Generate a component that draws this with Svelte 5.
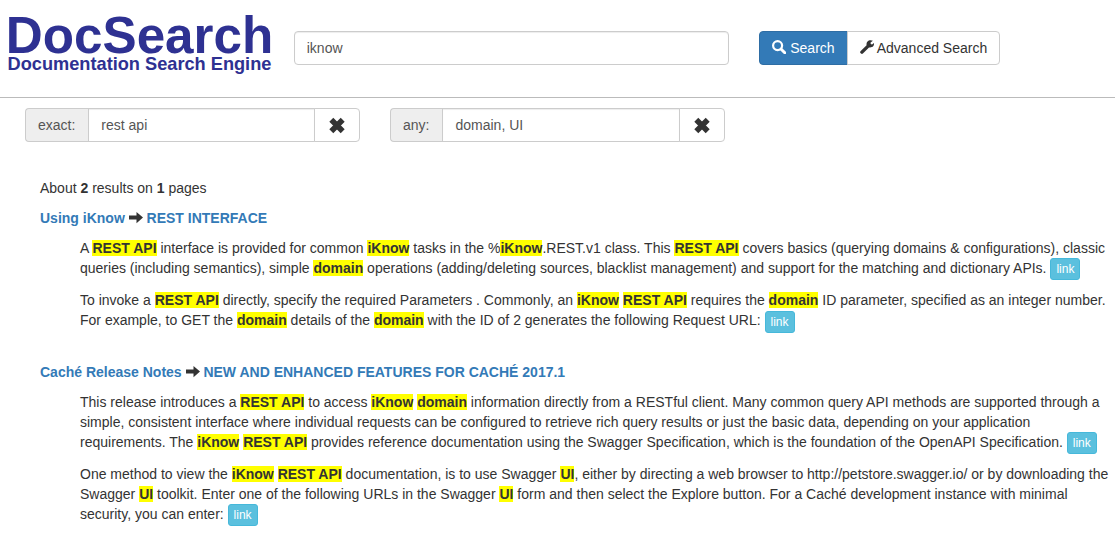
<script lang="ts">
	type Filter = { id: string; label: string; value: string };
	type Result = { book: string; topic: string; snippets: string[] };

	let query = $state('iknow');

	let filters: Filter[] = $state([
		{ id: 'exact', label: 'exact:', value: 'rest api' },
		{ id: 'any', label: 'any:', value: 'domain, UI' }
	]);

	// matched terms are wrapped in asterisks
	const results: Result[] = [
		{
			book: 'Using iKnow',
			topic: 'REST INTERFACE',
			snippets: [
				'A *REST API* interface is provided for common *iKnow* tasks in the %*iKnow*.REST.v1 class. This *REST API* covers basics (querying domains & configurations), classic queries (including semantics), simple *domain* operations (adding/deleting sources, blacklist management) and support for the matching and dictionary APIs.',
				'To invoke a *REST API* directly, specify the required Parameters . Commonly, an *iKnow* *REST API* requires the *domain* ID parameter, specified as an integer number. For example, to GET the *domain* details of the *domain* with the ID of 2 generates the following Request URL:'
			]
		},
		{
			book: 'Caché Release Notes',
			topic: 'NEW AND ENHANCED FEATURES FOR CACHÉ 2017.1',
			snippets: [
				'This release introduces a *REST API* to access *iKnow* *domain* information directly from a RESTful client. Many common query API methods are supported through a simple, consistent interface where individual requests can be configured to retrieve rich query results or just the basic data, depending on your application requirements. The *iKnow* *REST API* provides reference documentation using the Swagger Specification, which is the foundation of the OpenAPI Specification.',
				'One method to view the *iKnow* *REST API* documentation, is to use Swagger *UI*, either by directing a web browser to http://petstore.swagger.io/ or by downloading the Swagger *UI* toolkit. Enter one of the following URLs in the Swagger *UI* form and then select the Explore button. For a Caché development instance with minimal security, you can enter:'
			]
		}
	];

	function removeFilter(id: string) {
		filters = filters.filter((f) => f.id !== id);
	}
</script>

<form class="header" onsubmit={(e) => e.preventDefault()}>
	<div class="brand">
		<svg class="logo" viewBox="0 0 1330 310" role="img" aria-label="DocSearch">
			<text x="-11" y="192" font-size="256">DocSearch</text>
			<text x="-2" y="277" font-size="91">Documentation Search Engine</text>
		</svg>
	</div>
	<div class="query">
		<input class="control" type="text" aria-label="Search query" bind:value={query} />
	</div>
	<div class="actions">
		<button class="btn primary" type="submit">
			<svg class="icon" viewBox="0 0 14 14">
				<circle cx="5.6" cy="5.6" r="4.5" fill="none" stroke="currentColor" stroke-width="2.2" />
				<path d="M9.200 9.200l3.600 3.600" stroke="currentColor" stroke-width="3" stroke-linecap="round" />
			</svg>
			Search
		</button>
		<button class="btn" type="button">
			<svg class="icon" viewBox="0 0 14 14">
				<path
					fill="currentColor"
					d="M12.900.800 10.600 2.600l.1 1.300 1.300.6L14 3.100c.2 1.800-.6 3.300-2.100 4-1 .5-2 .5-2.900.3L2.900 13.500c-.6.6-1.300.6-1.900 0l-.5-.5c-.5-.5-.5-1.200 0-1.800L6.600 5.200C6.200 3.400 7.100 1.500 8.800.600c1.300-.7 2.800-.6 4.100.2z"
				/>
			</svg>
			Advanced Search
		</button>
	</div>
</form>

<div class="filters">
	{#each filters as filter (filter.id)}
		<div class="filter">
			<div class="group">
				<label for={filter.id}>{filter.label}</label>
				<input id={filter.id} class="control" type="text" bind:value={filter.value} />
				<button class="btn" type="button" aria-label="Remove" onclick={() => removeFilter(filter.id)}>
					<svg class="cross" viewBox="0 0 20 20">
						<path d="M4.300 4.800l11.400 11.400M15.700 4.800L4.300 16.200" stroke="currentColor" stroke-width="5.600" />
					</svg>
				</button>
			</div>
		</div>
	{/each}
</div>

<main>
	<p>About <b>2</b> results on <b>1</b> pages</p>
	{#each results as result}
		<section>
			<h2>
				<a href="#book">{result.book}</a>
				<svg class="icon" viewBox="0 0 14 14">
					<path fill="currentColor" d="M0 5.600h7.500V2L14 7.600l-6.500 5.600V9.600H0z" />
				</svg>
				<a href="#topic">{result.topic}</a>
			</h2>
			<div class="snippets">
				{#each result.snippets as snippet}
					<p>
						{#each snippet.split('*') as part, i}{#if i % 2}<mark>{part}</mark>{:else}{part}{/if}{/each}
						<a class="link" href="#doc">link</a>
					</p>
				{/each}
			</div>
		</section>
	{/each}
</main>

<style>
	:global(body) {
		margin: 0;
		background: #fff;
		color: #333;
		font: 14px/20px 'Liberation Sans', Arial, sans-serif;
	}

	:global(#app *) {
		box-sizing: border-box;
	}

	.header {
		display: grid;
		grid-template-columns: 3fr 5fr 4fr;
		padding: 15px 0;
		border-bottom: 1px solid #bbb;
	}

	.brand {
		padding: 0 4px 0 8px;
	}

	.logo {
		display: block;
		width: 266px;
		height: 62px;
		margin-bottom: 5px;
		fill: #2e3192;
		font-family: 'Liberation Sans', Arial, sans-serif;
		font-weight: bold;
		overflow: visible;
	}

	.query {
		padding: 16px 14px 0 15px;
	}

	.actions {
		display: flex;
		align-items: flex-start;
		padding: 16px 15px 0 16px;
	}

	.control {
		display: block;
		width: 100%;
		min-width: 0;
		height: 34px;
		padding: 6px 12px;
		border: 1px solid #ccc;
		border-radius: 4px;
		background: #fff;
		box-shadow: inset 0 1px 1px rgba(0, 0, 0, 0.075);
		color: #555;
		font: inherit;
	}

	.btn {
		height: 34px;
		padding: 6px 12px;
		border: 1px solid #ccc;
		border-radius: 0 4px 4px 0;
		background: #fff;
		color: #333;
		font: inherit;
		white-space: nowrap;
		cursor: pointer;
	}

	.primary {
		border-color: #2e6da4;
		border-radius: 4px 0 0 4px;
		background: #337ab7;
		color: #fff;
	}

	.primary + .btn {
		margin-left: -1px;
	}

	.icon {
		width: 14px;
		height: 14px;
		vertical-align: -1px;
	}

	.filters {
		display: grid;
		grid-template-columns: repeat(3, 1fr);
		padding: 10px 10px 0;
	}

	.filter {
		padding: 0 15px;
	}

	.group {
		display: flex;
	}

	.group label {
		padding: 6px 13px 6px 12px;
		border: 1px solid #ccc;
		border-right: 0;
		border-radius: 4px 0 0 4px;
		background: #eee;
		color: #555;
	}

	.group .control {
		flex: 1;
		border-radius: 0;
	}

	.group .btn {
		margin-left: -1px;
	}

	.cross {
		display: block;
		width: 20px;
		height: 20px;
	}

	main {
		padding: 36px 5px 0 40px;
	}

	p {
		margin: 0 0 10px;
	}

	section {
		margin-bottom: 29px;
	}

	h2 {
		margin: 0 0 10px;
		font-size: 14px;
		line-height: 20px;
	}

	a {
		color: #337ab7;
		text-decoration: none;
	}

	.snippets {
		padding-left: 40px;
	}

	mark {
		background: #ff0;
		color: inherit;
		font-weight: bold;
	}

	.link {
		display: inline-block;
		padding: 1px 5px;
		border: 1px solid #46b8da;
		border-radius: 3px;
		background: #5bc0de;
		color: #fff;
		font-size: 12px;
		line-height: 18px;
		vertical-align: middle;
	}
</style>
